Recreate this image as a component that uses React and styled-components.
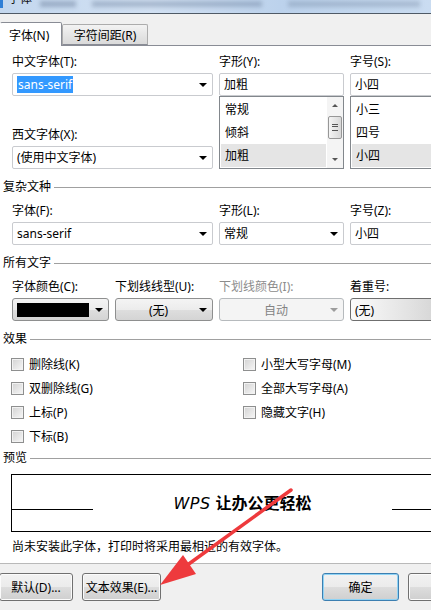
import React from 'react'
import styled, { createGlobalStyle } from 'styled-components'

const GlobalStyle = createGlobalStyle`
  html, body { margin: 0; padding: 0; background: #f0f0f0; }
  body {
    font-family: "Noto Sans", "Noto Sans CJK SC", sans-serif;
    font-size: 12px;
    color: #000;
  }
  * { box-sizing: border-box; }
`

const Window = styled.div`
  position: relative;
  width: 431px;
  height: 610px;
  overflow: hidden;
  display: flex;
  flex-direction: column;
  background: #f0f0f0;
`

const TitleBar = styled.div`
  flex: none;
  height: 14px;
  display: flex;
  align-items: flex-start;
  overflow: hidden;
  background: linear-gradient(90deg, #c3d7ee 0%, #d2e1f3 35%, #bcd2ec 65%, #cadcf1 100%);
  border-bottom: 1px solid #4f5a66;
`

const AppIcon = styled.span`
  width: 3px;
  height: 8px;
  background: #2f7fd6;
  flex: none;
`

const TitleText = styled.span`
  margin: -9px 0 0 5px;
  line-height: 16px;
  font-size: 12px;
  color: #111;
`

const Smudge = styled.span`
  flex: none;
  height: 6px;
  margin: 1px 0 0 ${p => p.$gap}px;
  width: ${p => p.$w}px;
  background: rgba(70, 90, 120, ${p => p.$o});
  filter: blur(2px);
`

const TabStrip = styled.div`
  flex: none;
  height: 31px;
  display: flex;
  align-items: flex-end;
`

const Tab = styled.div`
  position: relative;
  display: flex;
  align-items: center;
  justify-content: ${p => (p.$active ? 'flex-start' : 'center')};
  height: ${p => (p.$active ? 24 : 21)}px;
  width: ${p => p.$w}px;
  padding-left: ${p => (p.$active ? 8 : 0)}px;
  margin-bottom: ${p => (p.$active ? -1 : 0)}px;
  z-index: ${p => (p.$active ? 1 : 0)};
  border: 1px solid ${p => (p.$active ? '#898c95' : '#acacac')};
  border-bottom: ${p => (p.$active ? 'none' : '1px solid #898c95')};
  border-left-color: ${p => (p.$active ? 'transparent' : '#acacac')};
  background: ${p => (p.$active ? '#fff' : 'linear-gradient(#f3f3f3, #e6e6e6 50%, #dadada)')};
  border-radius: 2px 2px 0 0;
`

const Panel = styled.div`
  flex: none;
  height: 518px;
  background: #fff;
  border-top: 1px solid #898c95;
  overflow: hidden;
  display: flex;
  flex-direction: column;
`

const FieldGrid = styled.div`
  display: grid;
  grid-template-columns: ${p => p.$cols};
  column-gap: 6px;
  padding-left: 12px;
  margin-top: ${p => p.$mt}px;
`

const Column = styled.div`
  display: flex;
  flex-direction: column;
  min-width: 0;
`

const Label = styled.div`
  line-height: 16px;
  height: 16px;
  margin: ${p => p.$mt || 0}px 0 3px;
  white-space: nowrap;
  color: ${p => (p.$disabled ? '#8c8c8c' : '#000')};
`

const Combo = styled.div`
  height: 23px;
  display: flex;
  align-items: center;
  padding: 0 4px 0 4px;
  border: 1px solid #c9cbcf;
  border-radius: 2px;
  background: #fff;
  white-space: nowrap;
`

const ComboText = styled.span`
  flex: 1;
  line-height: 17px;
`

const Selected = styled.span`
  background: #3399ff;
  color: #fff;
  padding: 0 1px;
  line-height: 17px;
`

const Caret = styled.span`
  flex: none;
  width: 0;
  height: 0;
  margin-right: 1px;
  border-left: 4px solid transparent;
  border-right: 4px solid transparent;
  border-top: 4px solid ${p => (p.$disabled ? '#9c9c9c' : '#000')};
`

const DropButton = styled.div`
  height: 23px;
  display: flex;
  align-items: center;
  padding: 0 4px 0 4px;
  border: 1px solid ${p => (p.$disabled ? '#b6babd' : p.$hot ? '#6f6f6f' : '#8e8f8f')};
  border-radius: 3px;
  background: ${p =>
    p.$disabled
      ? '#f4f4f4'
      : p.$hot
      ? 'linear-gradient(90deg, #fbfbfb, #e2e2e2 60%, #cfcfcf)'
      : 'linear-gradient(#f4f4f4, #ececec 50%, #dedede 51%, #d4d4d4)'};
  color: ${p => (p.$disabled ? '#838383' : '#000')};
  white-space: nowrap;
`

const DropLabel = styled.span`
  flex: 1;
  text-align: ${p => (p.$left ? 'left' : 'center')};
  padding-right: ${p => (p.$left ? 0 : 2)}px;
`

const Swatch = styled.span`
  flex: 1;
  height: 14px;
  margin-right: 6px;
  background: #000;
`

const ListBox = styled.div`
  height: 73px;
  display: flex;
  border: 1px solid #82878c;
  background: #fff;
`

const ListItems = styled.div`
  flex: 1;
  padding: 1px 0 0 1px;
  min-width: 0;
`

const ListItem = styled.div`
  height: 23px;
  line-height: 23px;
  padding-left: 4px;
  background: ${p => (p.$selected ? '#e5e5e5' : 'transparent')};
  white-space: nowrap;
`

const ScrollBar = styled.div`
  flex: none;
  width: 17px;
  display: flex;
  flex-direction: column;
  align-items: center;
  background: #f4f4f4;
  border-left: 1px solid #fff;
`

const ScrollArrow = styled.div`
  height: 17px;
  width: 100%;
  display: flex;
  align-items: center;
  justify-content: center;
  &::before {
    content: '';
    border-left: 3px solid transparent;
    border-right: 3px solid transparent;
    ${p => (p.$up ? 'border-bottom' : 'border-top')}: 3px solid #555;
  }
`

const Thumb = styled.div`
  width: 14px;
  height: 23px;
  margin-top: 2px;
  border: 1px solid #979797;
  border-radius: 2px;
  background: linear-gradient(90deg, #f4f4f4, #e6e6e6 50%, #d8d8d8);
  display: flex;
  align-items: center;
  justify-content: center;
  &::after {
    content: '';
    width: 6px;
    height: 5px;
    border-top: 1px solid #555;
    border-bottom: 1px solid #555;
    background: linear-gradient(transparent 1px, #555 1px, #555 2px, transparent 2px);
  }
`

const Spacer = styled.div`
  flex: 1;
`

const SectionHeader = styled.div`
  display: flex;
  align-items: center;
  gap: 3px;
  height: 16px;
  line-height: 16px;
  padding-left: 3px;
  margin-top: ${p => p.$mt}px;
  &::after {
    content: '';
    flex: 1;
    height: 1px;
    background: #a0a0a0;
  }
`

const CheckGrid = styled.div`
  display: grid;
  grid-template-columns: 232px 1fr;
  grid-auto-rows: 24px;
  padding-left: 11px;
  margin-top: 5px;
`

const CheckRow = styled.label`
  display: flex;
  align-items: center;
  gap: 5px;
  white-space: nowrap;
`

const CheckBox = styled.span`
  width: 13px;
  height: 13px;
  flex: none;
  border: 1px solid #8e8f8f;
  box-shadow: inset 0 0 0 1px #f2f2f2;
  background: linear-gradient(135deg, #d2d2d2, #f7f7f7);
`

const PreviewBox = styled.div`
  flex: none;
  margin: 8px 0 0 11px;
  width: 463px;
  height: 58px;
  border: 1px solid #000;
  display: flex;
  align-items: flex-start;
`

const PreviewRule = styled.div`
  flex: none;
  width: 81px;
  height: 1px;
  margin-top: 34px;
  background: #000;
`

const PreviewText = styled.div`
  flex: 1;
  margin-top: 17px;
  line-height: 20px;
  text-align: center;
  white-space: nowrap;
`

const LatinSample = styled.span`
  font-family: "DejaVu Sans", sans-serif;
  font-style: italic;
  font-size: 16px;
  letter-spacing: 0.5px;
  margin-right: 5px;
`

const CjkSample = styled.span`
  font-family: "Noto Sans CJK SC", sans-serif;
  font-weight: 700;
  font-size: 16px;
`

const Note = styled.div`
  margin: 7px 0 0 12px;
  line-height: 16px;
  white-space: nowrap;
`

const Footer = styled.div`
  flex: 1;
  display: flex;
  align-items: flex-start;
  padding-top: 9px;
  border-top: 1px solid #b9b9b9;
  background: #f0f0f0;
`

const ButtonGroup = styled.div`
  display: flex;
  gap: 9px;
  margin-left: ${p => p.$ml}px;
`

const Button = styled.div`
  flex: none;
  width: ${p => p.$w}px;
  height: 28px;
  display: flex;
  align-items: center;
  justify-content: center;
  border: 1px solid ${p => (p.$default ? '#3c7fb1' : '#707070')};
  border-radius: 3px;
  background: linear-gradient(#f2f2f2, #ebebeb 50%, #dddddd 51%, #cfcfcf);
  box-shadow: inset 0 0 0 1px ${p => (p.$default ? '#8fd3f5' : '#fbfbfb')};
  white-space: nowrap;
`

const Pointer = styled.svg`
  position: absolute;
  left: 0;
  top: 0;
  pointer-events: none;
`

const RedArrow = () => (
  <Pointer width="431" height="610" viewBox="0 0 431 610">
    <line x1="291" y1="490" x2="186" y2="566" stroke="#ee3a3d" strokeWidth="3.5" strokeLinecap="round" />
    <polygon points="160,585 196,574 183,555" fill="#ee3a3d" />
  </Pointer>
)

const App = () => {
  return (
    <Window>
      <GlobalStyle />
      <TitleBar>
        <AppIcon />
        <TitleText>字体</TitleText>
        <Smudge $gap={8} $w={36} $o={0.35} />
        <Smudge $gap={16} $w={170} $o={0.3} />
        <Smudge $gap={26} $w={132} $o={0.25} />
      </TitleBar>
      <TabStrip>
        <Tab $active $w={62}>字体(N)</Tab>
        <Tab $w={86}>字符间距(R)</Tab>
      </TabStrip>
      <Panel>
        <FieldGrid $cols="201px 125px 100px" $mt={8}>
          <Column>
            <Label>中文字体(T):</Label>
            <Combo>
              <ComboText><Selected>sans-serif</Selected></ComboText>
              <Caret />
            </Combo>
            <Label $mt={31}>西文字体(X):</Label>
            <Combo>
              <ComboText>(使用中文字体)</ComboText>
              <Caret />
            </Combo>
          </Column>
          <Column>
            <Label>字形(Y):</Label>
            <Combo><ComboText>加粗</ComboText></Combo>
            <ListBox>
              <ListItems>
                <ListItem>常规</ListItem>
                <ListItem>倾斜</ListItem>
                <ListItem $selected>加粗</ListItem>
              </ListItems>
              <ScrollBar>
                <ScrollArrow $up />
                <Thumb />
                <Spacer />
                <ScrollArrow />
              </ScrollBar>
            </ListBox>
          </Column>
          <Column>
            <Label>字号(S):</Label>
            <Combo><ComboText>小四</ComboText></Combo>
            <ListBox>
              <ListItems>
                <ListItem>小三</ListItem>
                <ListItem>四号</ListItem>
                <ListItem $selected>小四</ListItem>
              </ListItems>
            </ListBox>
          </Column>
        </FieldGrid>

        <SectionHeader $mt={10}>复杂文种</SectionHeader>
        <FieldGrid $cols="201px 125px 100px" $mt={8}>
          <Column>
            <Label>字体(F):</Label>
            <Combo>
              <ComboText>sans-serif</ComboText>
              <Caret />
            </Combo>
          </Column>
          <Column>
            <Label>字形(L):</Label>
            <Combo>
              <ComboText>常规</ComboText>
              <Caret />
            </Combo>
          </Column>
          <Column>
            <Label>字号(Z):</Label>
            <Combo><ComboText>小四</ComboText></Combo>
          </Column>
        </FieldGrid>

        <SectionHeader $mt={10}>所有文字</SectionHeader>
        <FieldGrid $cols="97px 98px 125px 100px" $mt={8}>
          <Column>
            <Label>字体颜色(C):</Label>
            <DropButton>
              <Swatch />
              <Caret />
            </DropButton>
          </Column>
          <Column>
            <Label>下划线线型(U):</Label>
            <DropButton>
              <DropLabel>(无)</DropLabel>
              <Caret />
            </DropButton>
          </Column>
          <Column>
            <Label $disabled>下划线颜色(I):</Label>
            <DropButton $disabled>
              <DropLabel>自动</DropLabel>
              <Caret $disabled />
            </DropButton>
          </Column>
          <Column>
            <Label>着重号:</Label>
            <DropButton $hot>
              <DropLabel $left>(无)</DropLabel>
            </DropButton>
          </Column>
        </FieldGrid>

        <SectionHeader $mt={10}>效果</SectionHeader>
        <CheckGrid>
          <CheckRow><CheckBox />删除线(K)</CheckRow>
          <CheckRow><CheckBox />小型大写字母(M)</CheckRow>
          <CheckRow><CheckBox />双删除线(G)</CheckRow>
          <CheckRow><CheckBox />全部大写字母(A)</CheckRow>
          <CheckRow><CheckBox />上标(P)</CheckRow>
          <CheckRow><CheckBox />隐藏文字(H)</CheckRow>
          <CheckRow><CheckBox />下标(B)</CheckRow>
        </CheckGrid>

        <SectionHeader $mt={2}>预览</SectionHeader>
        <PreviewBox>
          <PreviewRule />
          <PreviewText>
            <LatinSample>WPS</LatinSample>
            <CjkSample>让办公更轻松</CjkSample>
          </PreviewText>
          <PreviewRule />
        </PreviewBox>
        <Note>尚未安装此字体，打印时将采用最相近的有效字体。</Note>
      </Panel>
      <Footer>
        <ButtonGroup $ml={-1}>
          <Button $w={74}>默认(D)...</Button>
          <Button $w={79}>文本效果(E)...</Button>
        </ButtonGroup>
        <ButtonGroup $ml={161}>
          <Button $w={77} $default>确定</Button>
          <Button $w={77} />
        </ButtonGroup>
      </Footer>
      <RedArrow />
    </Window>
  )
}

export default App
